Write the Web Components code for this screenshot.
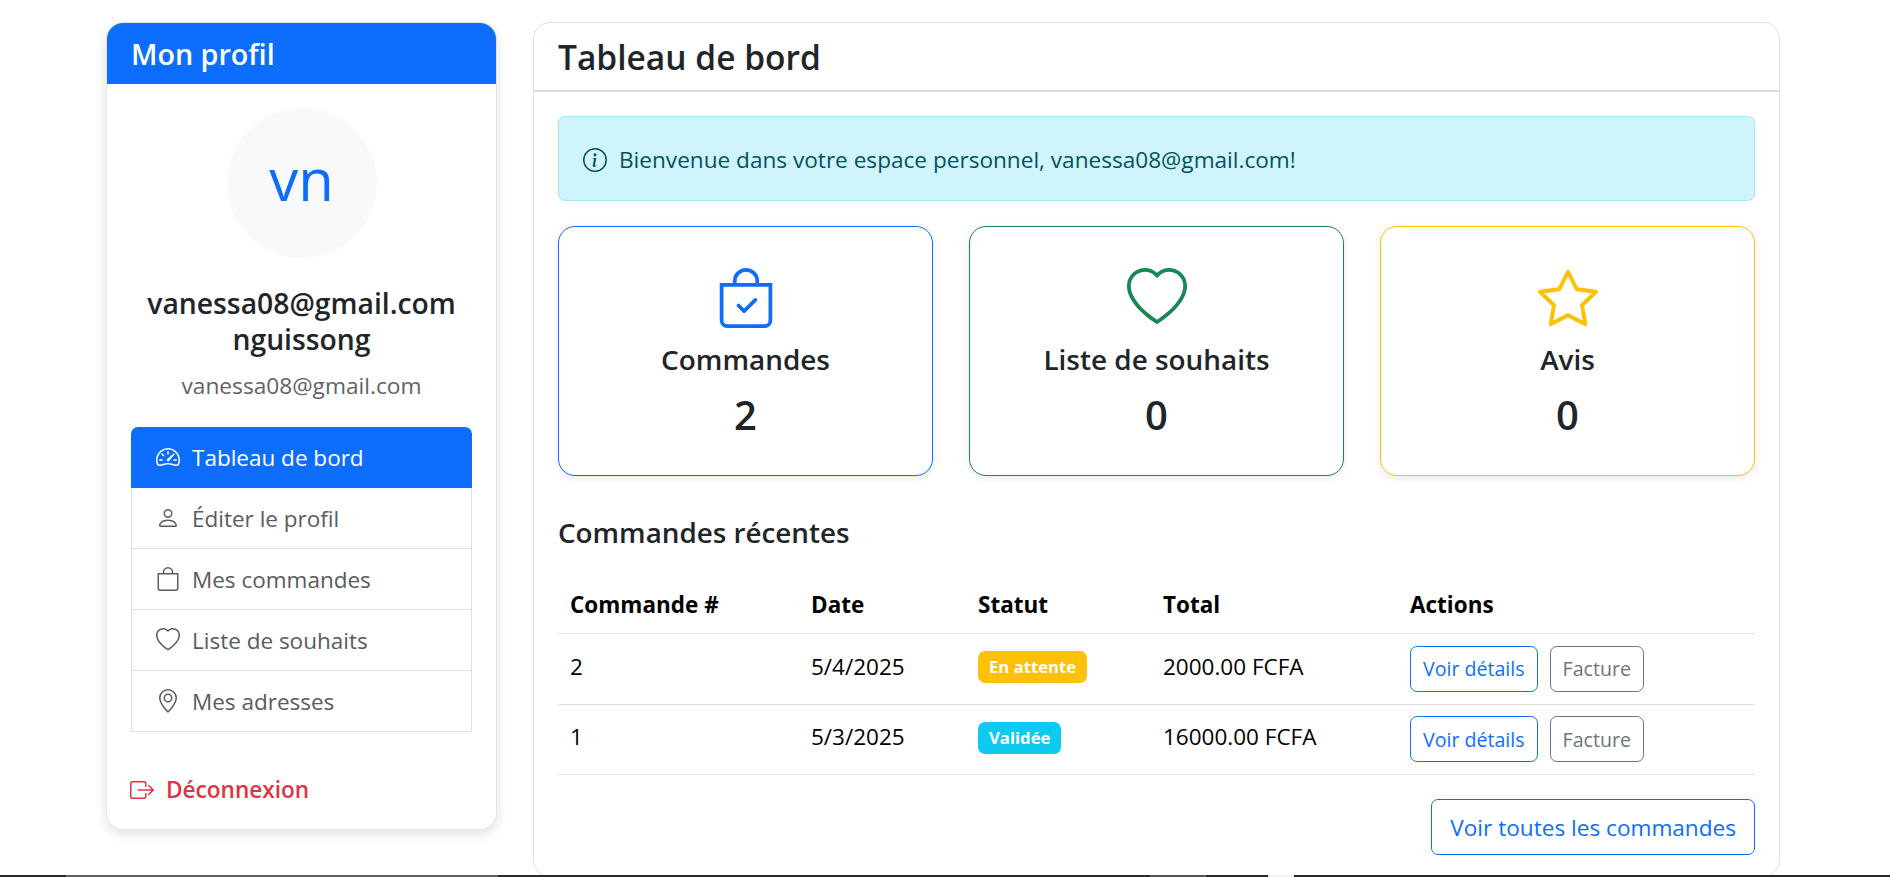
<!DOCTYPE html>
<html lang="fr">
<head>
<meta charset="utf-8">
<title>Tableau de bord</title>
<style>
  html, body { margin: 0; height: 877px; overflow: hidden; background: #fff; }
  body { font-family: "Open Sans", "Noto Sans", sans-serif; color: #212529; }
</style>
</head>
<body>
<account-page></account-page>

<script>
const ICONS = {
  speed: '<path d="M8 4a.5.5 0 0 1 .5.5V6a.5.5 0 0 1-1 0V4.5A.5.5 0 0 1 8 4zM3.732 5.732a.5.5 0 0 1 .707 0l.915.914a.5.5 0 1 1-.708.708l-.914-.915a.5.5 0 0 1 0-.707zM2 10a.5.5 0 0 1 .5-.5h1.586a.5.5 0 0 1 0 1H2.5A.5.5 0 0 1 2 10zm9.5 0a.5.5 0 0 1 .5-.5h1.5a.5.5 0 0 1 0 1H12a.5.5 0 0 1-.5-.5zm.754-4.246a.389.389 0 0 0-.527-.02L7.547 9.31a.91.91 0 1 0 1.302 1.258l3.434-4.297a.389.389 0 0 0-.029-.518z"/><path fill-rule="evenodd" d="M0 10a8 8 0 1 1 15.547 2.661c-.442 1.253-1.845 1.602-2.932 1.25C11.309 13.488 9.475 13 8 13c-1.474 0-3.31.488-4.615.911-1.087.352-2.49.003-2.932-1.25A7.988 7.988 0 0 1 0 10zm8-7a7 7 0 0 0-6.603 9.329c.203.575.923.876 1.68.63C4.397 12.533 6.358 12 8 12s3.604.532 4.923.96c.757.245 1.477-.056 1.68-.631A7 7 0 0 0 8 3z"/>',
  person: '<path d="M8 8a3 3 0 1 0 0-6 3 3 0 0 0 0 6zm2-3a2 2 0 1 1-4 0 2 2 0 0 1 4 0zm4 8c0 1-1 1-1 1H3s-1 0-1-1 1-4 6-4 6 3 6 4zm-1-.004c-.001-.246-.154-.986-.832-1.664C11.516 10.68 10.289 10 8 10c-2.29 0-3.516.68-4.168 1.332-.678.678-.83 1.418-.832 1.664h10z"/>',
  bag: '<path d="M8 1a2.5 2.5 0 0 1 2.5 2.5V4h-5v-.5A2.5 2.5 0 0 1 8 1zm3.5 3v-.5a3.5 3.5 0 1 0-7 0V4H1v10a2 2 0 0 0 2 2h10a2 2 0 0 0 2-2V4h-3.5zM2 5h12v9a1 1 0 0 1-1 1H3a1 1 0 0 1-1-1V5z"/>',
  bagCheck: '<path fill-rule="evenodd" d="M10.854 8.146a.5.5 0 0 1 0 .708l-3 3a.5.5 0 0 1-.708 0l-1.5-1.5a.5.5 0 0 1 .708-.708L7.5 10.793l2.646-2.647a.5.5 0 0 1 .708 0z"/><path d="M8 1a2.5 2.5 0 0 1 2.5 2.5V4h-5v-.5A2.5 2.5 0 0 1 8 1zm3.5 3v-.5a3.5 3.5 0 1 0-7 0V4H1v10a2 2 0 0 0 2 2h10a2 2 0 0 0 2-2V4h-3.5zM2 5h12v9a1 1 0 0 1-1 1H3a1 1 0 0 1-1-1V5z"/>',
  heart: '<path d="m8 2.748-.717-.737C5.6.281 2.514.878 1.4 3.053c-.523 1.023-.641 2.5.314 4.385.92 1.815 2.834 3.989 6.286 6.357 3.452-2.368 5.365-4.542 6.286-6.357.955-1.886.838-3.362.314-4.385C13.486.878 10.4.28 8.717 2.01L8 2.748zM8 15C-7.333 4.868 3.279-3.04 7.824 1.143c.06.055.119.112.176.171a3.12 3.12 0 0 1 .176-.17C12.72-3.042 23.333 4.867 8 15z"/>',
  pin: '<path d="M12.166 8.94c-.524 1.062-1.234 2.12-1.96 3.07A31.493 31.493 0 0 1 8 14.58a31.481 31.481 0 0 1-2.206-2.57c-.726-.95-1.436-2.008-1.96-3.07C3.304 7.867 3 6.862 3 6a5 5 0 0 1 10 0c0 .862-.305 1.867-.834 2.94zM8 16s6-5.686 6-10A6 6 0 0 0 2 6c0 4.314 6 10 6 10z"/><path d="M8 8a2 2 0 1 1 0-4 2 2 0 0 1 0 4zm0 1a3 3 0 1 0 0-6 3 3 0 0 0 0 6z"/>',
  exit: '<path fill-rule="evenodd" d="M10 12.5a.5.5 0 0 1-.5.5h-8a.5.5 0 0 1-.5-.5v-9a.5.5 0 0 1 .5-.5h8a.5.5 0 0 1 .5.5v2a.5.5 0 0 0 1 0v-2A1.5 1.5 0 0 0 9.5 2h-8A1.5 1.5 0 0 0 0 3.5v9A1.5 1.5 0 0 0 1.5 14h8a1.5 1.5 0 0 0 1.5-1.5v-2a.5.5 0 0 0-1 0v2z"/><path fill-rule="evenodd" d="M15.854 8.354a.5.5 0 0 0 0-.708l-3-3a.5.5 0 0 0-.708.708L14.293 7.5H5.5a.5.5 0 0 0 0 1h8.793l-2.147 2.146a.5.5 0 0 0 .708.708l3-3z"/>',
  info: '<path d="M8 15A7 7 0 1 1 8 1a7 7 0 0 1 0 14zm0 1A8 8 0 1 0 8 0a8 8 0 0 0 0 16z"/><path d="m8.93 6.588-2.29.287-.082.38.45.083c.294.07.352.176.288.469l-.738 3.468c-.194.897.105 1.319.808 1.319.545 0 1.178-.252 1.465-.598l.088-.416c-.2.176-.492.246-.686.246-.275 0-.375-.193-.304-.533L8.93 6.588zM9 4.5a1 1 0 1 1-2 0 1 1 0 0 1 2 0z"/>',
  star: '<path d="M2.866 14.85c-.078.444.36.791.746.593l4.39-2.256 4.389 2.256c.386.198.824-.149.746-.592l-.83-4.73 3.522-3.356c.33-.314.16-.888-.282-.95l-4.898-.696L8.465.792a.513.513 0 0 0-.927 0L5.354 5.12l-4.898.696c-.441.062-.612.636-.283.95l3.523 3.356-.83 4.73zm4.905-2.767-3.686 1.894.694-3.957a.565.565 0 0 0-.163-.505L1.71 6.745l4.052-.576a.525.525 0 0 0 .393-.288L8 2.223l1.847 3.658a.525.525 0 0 0 .393.288l4.052.575-2.906 2.77a.565.565 0 0 0-.163.506l.694 3.957-3.686-1.894a.503.503 0 0 0-.461 0z"/>'
};

const TABLE_COLUMNS = '241px 167px 185px 247px 1fr';

function icon(name, size) {
  return `<svg xmlns="http://www.w3.org/2000/svg" width="${size}" height="${size}" viewBox="0 0 16 16" fill="currentColor" aria-hidden="true">${ICONS[name]}</svg>`;
}

class SideLink extends HTMLElement {
  constructor() {
    super();
    this.shadowDOM = this.attachShadow({mode: 'open'});
  }

  connectedCallback() {
    this.shadowDOM.innerHTML = `
      <style>
        :host {
          display: flex;
          align-items: center;
          gap: 12px;
          height: 61px;
          box-sizing: border-box;
          padding: 0 24px;
          color: #595c5f;
          font-size: 22.5px;
          border: 1px solid #dfe0e1;
          border-top: 0;
        }
        :host([active]) {
          background: #0d6efd;
          border-color: #0d6efd;
          color: #fff;
          border-radius: 7px 7px 0 0;
        }
        svg { flex: none; }
      </style>
      ${icon(this.getAttribute('icon'), 24)}
      <slot></slot>
    `;
  }
}

class StatCard extends HTMLElement {
  constructor() {
    super();
    this.shadowDOM = this.attachShadow({mode: 'open'});
  }

  connectedCallback() {
    const color = this.getAttribute('color');
    this.shadowDOM.innerHTML = `
      <style>
        :host {
          display: flex;
          flex-direction: column;
          align-items: center;
          height: 250px;
          box-sizing: border-box;
          padding-top: 41px;
          border: 1px solid ${color};
          border-radius: 17px;
          box-shadow: 0 2px 8px rgba(0, 0, 0, 0.09);
          background: #fff;
        }
        svg { color: ${color}; display: block; }
        .name { margin-top: 14px; font-size: 27.9px; font-weight: 600; line-height: 34px; }
        .count { margin-top: 16px; font-size: 40px; font-weight: 600; line-height: 46px; }
      </style>
      ${icon(this.getAttribute('icon'), 60)}
      <div class="name"><slot></slot></div>
      <div class="count">${this.getAttribute('count')}</div>
    `;
  }
}

class StatusBadge extends HTMLElement {
  constructor() {
    super();
    this.shadowDOM = this.attachShadow({mode: 'open'});
  }

  connectedCallback() {
    this.shadowDOM.innerHTML = `
      <style>
        :host {
          display: inline-block;
          padding: 6px 11px;
          border-radius: 7px;
          background: ${this.getAttribute('color')};
          color: #fff;
          font-size: 16.7px;
          line-height: 20px;
          font-weight: 700;
        }
      </style>
      <slot></slot>
    `;
  }
}

class OutlineButton extends HTMLElement {
  constructor() {
    super();
    this.shadowDOM = this.attachShadow({mode: 'open'});
  }

  connectedCallback() {
    const color = this.getAttribute('color') || '#0d6efd';
    const big = this.hasAttribute('big');
    this.shadowDOM.innerHTML = `
      <style>
        :host {
          display: inline-flex;
          align-items: center;
          box-sizing: border-box;
          height: ${big ? 56 : 46}px;
          padding: 0 ${big ? 18 : 12}px;
          border: 1px solid ${color};
          border-radius: 7px;
          color: ${color};
          font-size: ${big ? 22.6 : 19.6}px;
        }
      </style>
      <slot></slot>
    `;
  }
}

class OrderRow extends HTMLElement {
  constructor() {
    super();
    this.shadowDOM = this.attachShadow({mode: 'open'});
  }

  connectedCallback() {
    this.shadowDOM.innerHTML = `
      <style>
        :host {
          display: grid;
          grid-template-columns: ${TABLE_COLUMNS};
          align-items: center;
          height: 70.5px;
          box-sizing: border-box;
          padding-left: 12px;
          border-bottom: 1px solid #dee2e6;
          color: #000;
          font-size: 22.5px;
        }
        .cell { padding-bottom: 5px; }
        .acts { display: flex; gap: 12px; }
      </style>
      <div class="cell">${this.getAttribute('num')}</div>
      <div class="cell">${this.getAttribute('date')}</div>
      <div class="cell"><status-badge color="${this.getAttribute('status-color')}">${this.getAttribute('status')}</status-badge></div>
      <div class="cell">${this.getAttribute('total')}</div>
      <div class="acts">
        <outline-button>Voir détails</outline-button>
        <outline-button color="#6c757d">Facture</outline-button>
      </div>
    `;
  }
}

class ProfileCard extends HTMLElement {
  constructor() {
    super();
    this.shadowDOM = this.attachShadow({mode: 'open'});
  }

  connectedCallback() {
    this.shadowDOM.innerHTML = `
      <style>
        :host {
          display: block;
          height: 808px;
          box-sizing: border-box;
          border: 1px solid #e4e5e6;
          border-radius: 17px;
          box-shadow: 0 4px 12px rgba(0, 0, 0, 0.12);
          background: #fff;
          overflow: hidden;
        }
        header {
          height: 61px;
          box-sizing: border-box;
          padding-left: 24px;
          background: #0d6efd;
          color: #fff;
          font-size: 28.7px;
          font-weight: 600;
          line-height: 61px;
        }
        .body { padding: 24px; text-align: center; }
        .avatar {
          width: 150px;
          height: 150px;
          margin: 0 auto;
          border-radius: 50%;
          background: #f8f9fa;
          color: #0d6efd;
          font-size: 58px;
          line-height: 142px;
        }
        h5 { margin: 27px 0 0; font-size: 28.3px; line-height: 36px; font-weight: 600; }
        .mail { margin: 15px 0 0; color: #5f6367; font-size: 22.7px; line-height: 28px; }
        nav { margin-top: 27px; text-align: left; }
        .logout {
          display: flex;
          align-items: center;
          gap: 12px;
          margin-top: 42px;
          margin-left: -1px;
          color: #dc3545;
          font-size: 22.6px;
          font-weight: 600;
          text-align: left;
        }
      </style>
      <header>Mon profil</header>
      <div class="body">
        <div class="avatar">vn</div>
        <h5>vanessa08@gmail.com<br>nguissong</h5>
        <p class="mail">vanessa08@gmail.com</p>
        <nav>
          <side-link icon="speed" active>Tableau de bord</side-link>
          <side-link icon="person">Éditer le profil</side-link>
          <side-link icon="bag">Mes commandes</side-link>
          <side-link icon="heart">Liste de souhaits</side-link>
          <side-link icon="pin">Mes adresses</side-link>
        </nav>
        <div class="logout">${icon('exit', 24)}<span>Déconnexion</span></div>
      </div>
    `;
  }
}

class DashboardCard extends HTMLElement {
  constructor() {
    super();
    this.shadowDOM = this.attachShadow({mode: 'open'});
  }

  connectedCallback() {
    this.shadowDOM.innerHTML = `
      <style>
        :host {
          display: block;
          height: 855px;
          box-sizing: border-box;
          border: 1px solid #e0e0e0;
          border-radius: 17px;
          background: #fff;
        }
        header {
          height: 69px;
          box-sizing: border-box;
          padding-left: 24px;
          border-bottom: 2px solid #dcdcdc;
          font-size: 33.5px;
          font-weight: 600;
          line-height: 69px;
        }
        .body { padding: 24px; }
        .alert {
          display: flex;
          align-items: center;
          gap: 12px;
          height: 85px;
          box-sizing: border-box;
          padding: 2px 24px 0;
          background: #cff4fc;
          border: 1px solid #9eeaf9;
          border-radius: 7px;
          color: #055160;
          font-size: 22.6px;
        }
        .stats {
          display: grid;
          grid-template-columns: repeat(3, 1fr);
          gap: 36px;
          margin-top: 25px;
        }
        h4 { margin: 37px 0 0; font-size: 27.8px; font-weight: 600; line-height: 38px; }
        .head {
          display: grid;
          grid-template-columns: ${TABLE_COLUMNS};
          align-items: center;
          height: 58px;
          margin-top: 24px;
          padding-left: 12px;
          border-bottom: 1px solid #dee2e6;
          color: #000;
          font-size: 22.5px;
          font-weight: 700;
        }
        .more { display: flex; justify-content: flex-end; margin-top: 24px; }
      </style>
      <header>Tableau de bord</header>
      <div class="body">
        <div class="alert">${icon('info', 24)}<span>Bienvenue dans votre espace personnel, vanessa08@gmail.com!</span></div>
        <div class="stats">
          <stat-card icon="bagCheck" color="#0d6efd" count="2">Commandes</stat-card>
          <stat-card icon="heart" color="#198754" count="0">Liste de souhaits</stat-card>
          <stat-card icon="star" color="#ffc107" count="0">Avis</stat-card>
        </div>
        <h4>Commandes récentes</h4>
        <div class="head">
          <div>Commande #</div><div>Date</div><div>Statut</div><div>Total</div><div>Actions</div>
        </div>
        <order-row num="2" date="5/4/2025" status="En attente" status-color="#ffc107" total="2000.00 FCFA"></order-row>
        <order-row num="1" date="5/3/2025" status="Validée" status-color="#0dcaf0" total="16000.00 FCFA"></order-row>
        <div class="more"><outline-button big>Voir toutes les commandes</outline-button></div>
      </div>
    `;
  }
}

class AccountPage extends HTMLElement {
  constructor() {
    super();
    this.shadowDOM = this.attachShadow({mode: 'open'});
  }

  connectedCallback() {
    this.shadowDOM.innerHTML = `
      <style>
        :host {
          display: grid;
          grid-template-columns: 391px 1247px;
          column-gap: 36px;
          align-items: start;
          padding: 22px 0 0 106px;
        }
        .taskbar {
          position: fixed;
          left: 0;
          right: 0;
          bottom: 0;
          height: 2px;
          display: flex;
          background: #2b2c20;
        }
        .taskbar i { display: block; }
        .a { width: 66px; }
        .b { width: 432px; background: #5f5f5f; }
        .c { width: 652px; }
        .d { width: 56px; background: #55564e; }
        .e { width: 62px; }
        .f { width: 26px; background: #f2f2f2; }
        .g { flex: 1; background: #26272a; }
      </style>
      <profile-card></profile-card>
      <dashboard-card></dashboard-card>
      <div class="taskbar"><i class="a"></i><i class="b"></i><i class="c"></i><i class="d"></i><i class="e"></i><i class="f"></i><i class="g"></i></div>
    `;
  }
}

customElements.define('side-link', SideLink);
customElements.define('stat-card', StatCard);
customElements.define('status-badge', StatusBadge);
customElements.define('outline-button', OutlineButton);
customElements.define('order-row', OrderRow);
customElements.define('profile-card', ProfileCard);
customElements.define('dashboard-card', DashboardCard);
customElements.define('account-page', AccountPage);
</script>
</body>
</html>
